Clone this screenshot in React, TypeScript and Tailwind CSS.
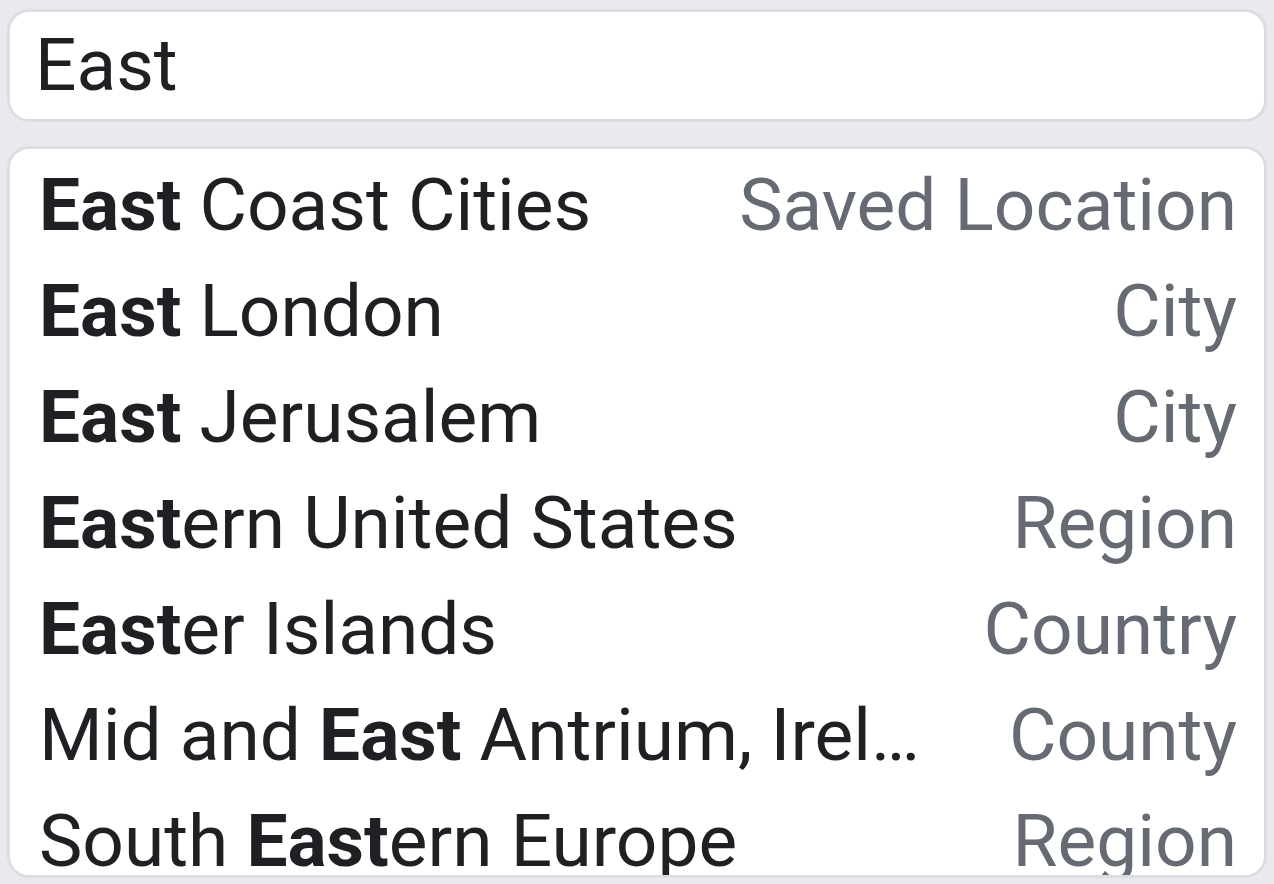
import React from "react";

type Part = { t: string; b?: boolean };
const rows: { parts: Part[]; kind: string }[] = [
  { parts: [{ t: "East", b: true }, { t: " Coast Cities" }], kind: "Saved Location" },
  { parts: [{ t: "East", b: true }, { t: " London" }], kind: "City" },
  { parts: [{ t: "East", b: true }, { t: " Jerusalem" }], kind: "City" },
  { parts: [{ t: "East", b: true }, { t: "ern United States" }], kind: "Region" },
  { parts: [{ t: "East", b: true }, { t: "er Islands" }], kind: "Country" },
  { parts: [{ t: "Mid and " }, { t: "East", b: true }, { t: " Antrium, Ireland" }], kind: "County" },
  { parts: [{ t: "South " }, { t: "East", b: true }, { t: "ern Europe" }], kind: "Region" },
];

export default function App() {
  return (
    <div
      className="w-[1274px] h-[884px] overflow-hidden bg-[#e9eaee] px-[7px] pt-[9px]"
      style={{ fontFamily: "Roboto, 'Noto Sans', sans-serif" }}
    >
      <div className="h-[113px] rounded-[22px] border-[3px] border-[#dcdde2] bg-white flex items-center pl-[25px] text-[73px] text-[#1f2023]">
        East
      </div>
      <div className="mt-[24px] h-[732px] rounded-[22px] border-[3px] border-[#dcdde2] bg-white overflow-hidden pl-[29px] pr-[27px] pt-[3px]">
        {rows.map((r, i) => (
          <div key={i} className="flex items-center h-[106px] text-[73px] leading-[106px] gap-[84px]">
            <div className="min-w-0 flex-1 truncate text-[#1f2023]">
              {r.parts.map((p, j) => (
                <span key={j} className={p.b ? "font-bold" : ""}>
                  {p.t}
                </span>
              ))}
            </div>
            <div className="shrink-0 text-[#656a73]">{r.kind}</div>
          </div>
        ))}
      </div>
    </div>
  );
}
